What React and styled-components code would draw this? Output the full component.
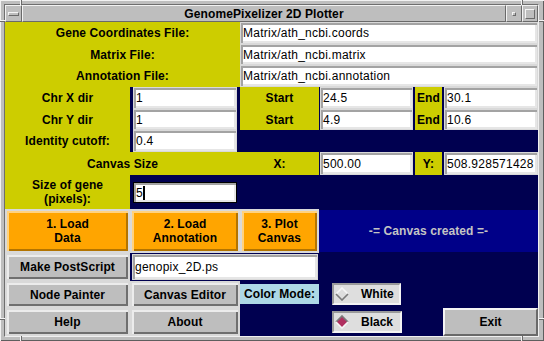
import React from 'react';
import styled, { createGlobalStyle } from 'styled-components';

const NAVY = '#000050';
const STATUS = '#000088';
const YELLOW = '#cdcd00';
const ORANGE = '#ffa500';
const GREY = '#bebebe';
const RING = '#d9d9d9';
const SKY = '#add8e6';

const Global = createGlobalStyle`
  html, body { margin: 0; padding: 0; background: ${GREY}; }
  body { font-family: "Liberation Sans", Arial, Helvetica, sans-serif; font-size: 12px; color: #000; }
  * { box-sizing: border-box; }
`;

const Window = styled.div`
  position: relative;
  width: 544px;
  height: 341px;
  background: ${GREY};
  padding: 4px 5px 4px 4px;
  box-shadow: inset 1px 1px 0 #f2f2f2, inset -1px -1px 0 #5e5e5e;
`;

const Notch = styled.span`
  position: absolute;
  ${p => p.$v ? `width: 2px; height: 5px;` : `width: 5px; height: 2px;`}
  border-style: solid;
  border-color: #6a6a6a;
  border-width: ${p => p.$v ? '0 1px 0 0' : '0 0 1px 0'};
  background: #f4f4f4;
  ${p => p.$pos}
`;

const Inner = styled.div`
  display: flex;
  flex-direction: column;
  height: 100%;
  border: 1px solid;
  border-color: #6e6e6e #f0f0f0 #f0f0f0 #6e6e6e;
`;

const TitleBar = styled.div`
  display: flex;
  height: 17px;
  flex: none;
`;

const Bevel = styled.div`
  background: ${GREY};
  border: 1px solid;
  border-color: #f2f2f2 #6a6a6a #6a6a6a #f2f2f2;
  display: flex;
  align-items: center;
  justify-content: center;
`;

const WinButton = styled(Bevel)`
  width: ${p => p.$w}px;
  flex: none;
`;

const TitleText = styled(Bevel)`
  flex: 1;
  font: bold 12px/1 "Liberation Sans", Arial, sans-serif;
  letter-spacing: 0.1px;
`;

const MinGlyph = styled.span`
  width: 11px;
  height: 4px;
  border: 1px solid;
  border-color: #f4f4f4 #6a6a6a #6a6a6a #f4f4f4;
`;

const BoxGlyph = styled.span`
  width: ${p => p.$s}px;
  height: ${p => p.$s}px;
  border: 1px solid;
  border-color: #f4f4f4 #6a6a6a #6a6a6a #f4f4f4;
`;

const Grid = styled.div`
  flex: 1;
  display: grid;
  grid-template-columns: 125px 110px 79px 96px 27px 96px;
  grid-template-rows: 22px 21px 22px 22px 21px 22px 23px 34px 44px 28px 27px 28px;
  background: ${NAVY};
`;

const Label = styled.div`
  grid-area: ${p => p.$area};
  margin: ${p => p.$m || '0'};
  background: ${p => p.$bg || YELLOW};
  display: flex;
  align-items: center;
  justify-content: center;
  text-align: center;
  font: bold 12px/14px "Liberation Sans", Arial, sans-serif;
  letter-spacing: 0.1px;
  color: #000;
  white-space: pre-line;
`;

const Field = styled.div`
  grid-area: ${p => p.$area};
  margin: ${p => p.$m || '0'};
  background: #fff;
  border: 1px solid ${p => (p.$focus ? '#000' : RING)};
  box-shadow: inset 2px 2px 0 #a3a3a3, inset -2px -2px 0 #e6e6e6;
  padding: 0 3px 0 2px;
  display: flex;
  align-items: center;
  overflow: hidden;
  white-space: nowrap;
  font: 12px/1 "Liberation Sans", Arial, sans-serif;
  letter-spacing: 0.25px;
`;

const Caret = styled.span`
  display: inline-block;
  width: 2px;
  height: 14px;
  background: #000;
  margin-left: 0;
`;

const Button = styled.div`
  grid-area: ${p => p.$area};
  border: 2px solid ${RING};
  background: ${p => (p.$orange ? ORANGE : GREY)};
  box-shadow: ${p =>
    p.$orange
      ? 'inset 2px 2px 0 #ffd27f, inset -2px -2px 0 #b37400'
      : 'inset 2px 2px 0 #ececec, inset -2px -2px 0 #6f6f6f'};
  display: flex;
  align-items: center;
  justify-content: center;
  text-align: center;
  white-space: pre-line;
  font: bold 12px/14px "Liberation Sans", Arial, sans-serif;
  letter-spacing: 0.1px;
`;

const ExitButton = styled.div`
  grid-area: ${p => p.$area};
  margin: 0 0 0 1px;
  background: ${GREY};
  border: 2px solid;
  border-color: #f4f4f4 #6a6a6a #6a6a6a #f4f4f4;
  display: flex;
  align-items: center;
  justify-content: center;
  font: bold 12px/1 "Liberation Sans", Arial, sans-serif;
`;

const Status = styled.div`
  grid-area: ${p => p.$area};
  margin: 1px 0;
  background: ${STATUS};
  color: #c4c4c4;
  display: flex;
  align-items: center;
  justify-content: center;
  font: bold 12px/1 "Liberation Sans", Arial, sans-serif;
  letter-spacing: 0.1px;
`;

const Radio = styled.div`
  grid-area: ${p => p.$area};
  margin: ${p => p.$m};
  background: #dedede;
  border: 2px solid;
  border-color: #9a9a9a #f4f4f4 #f4f4f4 #9a9a9a;
  display: flex;
  align-items: center;
  padding-left: 1px;
  gap: 12px;
  font: bold 12px/1 "Liberation Sans", Arial, sans-serif;
`;

function Diamond({ on }) {
  return (
    <svg width="14" height="14" viewBox="0 0 14 14">
      <polygon points="7,1 13,7 7,13 1,7" fill={on ? '#b03060' : '#dedede'} />
      <polyline points="1,7 7,1 13,7" fill="none" stroke={on ? '#7a7a7a' : '#f6f6f6'} strokeWidth="1.6" />
      <polyline points="1,7 7,13 13,7" fill="none" stroke={on ? '#f6f6f6' : '#7a7a7a'} strokeWidth="1.6" />
    </svg>
  );
}

export default function App() {
  return (
    <>
      <Global />
      <Window>
        <Notch $v $pos="left: 20px; top: 0;" />
        <Notch $v $pos="left: 521px; top: 0;" />
        <Notch $v $pos="left: 20px; bottom: 0;" />
        <Notch $v $pos="left: 521px; bottom: 0;" />
        <Notch $pos="left: 0; top: 20px;" />
        <Notch $pos="right: 0; top: 20px;" />
        <Notch $pos="left: 0; bottom: 21px;" />
        <Notch $pos="right: 0; bottom: 21px;" />
        <Inner>
          <TitleBar>
            <WinButton $w={17}><MinGlyph /></WinButton>
            <TitleText>GenomePixelizer 2D Plotter</TitleText>
            <WinButton $w={16}><BoxGlyph $s={4} /></WinButton>
            <WinButton $w={16}><BoxGlyph $s={10} /></WinButton>
          </TitleBar>
          <Grid>
            <Label $area="1 / 1 / 2 / 3">Gene Coordinates File:</Label>
            <Field $area="1 / 3 / 2 / 7">Matrix/ath_ncbi.coords</Field>
            <Label $area="2 / 1 / 3 / 3">Matrix File:</Label>
            <Field $area="2 / 3 / 3 / 7">Matrix/ath_ncbi.matrix</Field>
            <Label $area="3 / 1 / 4 / 3">Annotation File:</Label>
            <Field $area="3 / 3 / 4 / 7">Matrix/ath_ncbi.annotation</Field>

            <Label $area="4 / 1 / 5 / 2">Chr X dir</Label>
            <Field $area="4 / 2 / 5 / 3" $m="0 3px">1</Field>
            <Label $area="4 / 3 / 5 / 4">Start</Label>
            <Field $area="4 / 4 / 5 / 5" $m="0 2px 0 1px">24.5</Field>
            <Label $area="4 / 5 / 5 / 6">End</Label>
            <Field $area="4 / 6 / 5 / 7" $m="0 0 0 2px">30.1</Field>

            <Label $area="5 / 1 / 6 / 2">Chr Y dir</Label>
            <Field $area="5 / 2 / 6 / 3" $m="0 3px">1</Field>
            <Label $area="5 / 3 / 6 / 4">Start</Label>
            <Field $area="5 / 4 / 6 / 5" $m="0 2px 0 1px">4.9</Field>
            <Label $area="5 / 5 / 6 / 6">End</Label>
            <Field $area="5 / 6 / 6 / 7" $m="0 0 0 2px">10.6</Field>

            <Label $area="6 / 1 / 7 / 2">Identity cutoff:</Label>
            <Field $area="6 / 2 / 7 / 3" $m="0 3px">0.4</Field>

            <Label $area="7 / 1 / 8 / 3">Canvas Size</Label>
            <Label $area="7 / 3 / 8 / 4">X:</Label>
            <Field $area="7 / 4 / 8 / 5" $m="0 2px 0 1px">500.00</Field>
            <Label $area="7 / 5 / 8 / 6">Y:</Label>
            <Field $area="7 / 6 / 8 / 7" $m="0 0 0 2px">508.928571428</Field>

            <Label $area="8 / 1 / 9 / 2">{'Size of gene\n(pixels):'}</Label>
            <Field $area="8 / 2 / 9 / 3" $m="7px 3px 6px 3px" $focus>5<Caret /></Field>

            <Button $area="9 / 1 / 10 / 2" $orange>{'1. Load\nData'}</Button>
            <Button $area="9 / 2 / 10 / 3" $orange>{'2. Load\nAnnotation'}</Button>
            <Button $area="9 / 3 / 10 / 4" $orange>{'3. Plot\nCanvas'}</Button>
            <Status $area="9 / 4 / 10 / 7">-= Canvas created =-</Status>

            <Button $area="10 / 1 / 11 / 2">Make PostScript</Button>
            <Field $area="10 / 2 / 11 / 4" $m="1px 1px 1px 2px">genopix_2D.ps</Field>

            <Button $area="11 / 1 / 12 / 2">Node Painter</Button>
            <Button $area="11 / 2 / 12 / 3">Canvas Editor</Button>
            <Label $area="11 / 3 / 12 / 4" $bg={SKY} $m="3px 0 4px 0">Color Mode:</Label>
            <Radio $area="11 / 4 / 12 / 5" $m="2px 14px 3px 13px"><Diamond />White</Radio>

            <Button $area="12 / 1 / 13 / 2">Help</Button>
            <Button $area="12 / 2 / 13 / 3">About</Button>
            <Radio $area="12 / 4 / 13 / 5" $m="3px 13px 3px 13px"><Diamond on />Black</Radio>
            <ExitButton $area="12 / 6 / 13 / 7">Exit</ExitButton>
          </Grid>
        </Inner>
      </Window>
    </>
  );
}
